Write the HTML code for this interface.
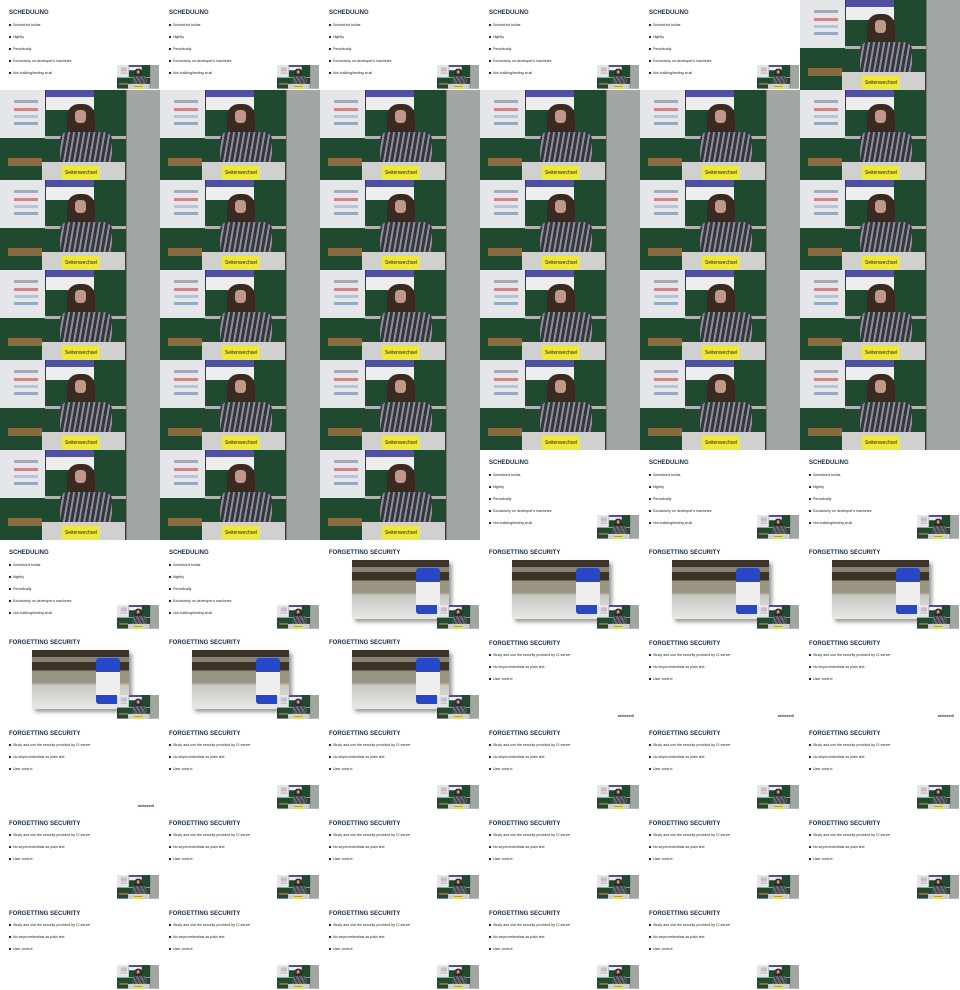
<!DOCTYPE html>
<html><head><meta charset="utf-8"><style>
*{margin:0;padding:0;box-sizing:border-box}
body{width:960px;height:990px;overflow:hidden;background:#fff;font-family:"Liberation Sans",sans-serif}
#g{display:flex;flex-wrap:wrap;width:960px}
.c{width:160px;height:90px;position:relative;overflow:hidden;background:#fff}
.v{position:absolute;left:0;top:0;width:160px;height:90px;background:#1f4a30;overflow:hidden}
.v i{position:absolute;display:block;font-style:normal}
.p{left:0;top:0;width:45px;height:48px;background:#e4e6ea}
.p::after{content:"";position:absolute;left:14px;top:10px;width:24px;height:30px;background:linear-gradient(#8a90a0 0 3px,transparent 3px 8px,#c06060 8px 11px,transparent 11px 15px,#9ab8d8 15px 18px,transparent 18px 22px,#7090b0 22px 25px,transparent 25px);opacity:.7}
.b{left:46px;top:0;width:48px;height:20px;background:linear-gradient(#5050a0 0 7px,#eeeeee 7px)}
.g{left:126px;top:0;width:34px;height:90px;background:#a3a7a3;border-left:1px solid #777}
.l{left:45px;top:46px;width:81px;height:3px;background:#b0b4b0}
.h{left:67px;top:14px;width:28px;height:54px;background:#3a2a22;border-radius:12px 12px 4px 4px}
.f{left:75px;top:20px;width:11px;height:13px;background:#c09888;border-radius:4px}
.t{left:60px;top:42px;width:52px;height:32px;background:repeating-linear-gradient(100deg,#34363e 0 3px,#8e8e98 3px 5px);border-radius:8px 8px 0 0}
.d{left:8px;top:68px;width:34px;height:8px;background:#8a6a40}
.pd{left:42px;top:72px;width:83px;height:18px;background:#d0d0ce}
.y{left:62px;top:76px;width:38px;height:14px;background:#f0e838;font-size:5px;line-height:14px;text-align:center;color:#222}
.s h3{position:absolute;left:9px;top:10px;font-size:6px;color:#1b2a4c;font-weight:bold}
.s p{position:absolute;left:13px;font-size:3.6px;color:#222}
.s p::before{content:"";position:absolute;left:-4px;top:1px;width:1.5px;height:1.5px;background:#1b2a4c}
.in{position:absolute;left:117px;top:65px;width:42px;height:24px;overflow:hidden}
.in .v{transform:scale(.2625);transform-origin:0 0}
.im{position:absolute;left:32px;top:20px;width:97px;height:59px;background:linear-gradient(#3a3428 0 12%,#8a8270 12% 20%,#3a3428 20% 35%,#9a9482 35% 55%,#c8c8c2 60%,#e8e8e6);box-shadow:3px 3px 4px #999}
.im::after{content:"";position:absolute;left:64px;top:8px;width:24px;height:46px;background:linear-gradient(#2848c8 0 30%,#eee 30% 80%,#2848c8 80%);border-radius:3px}
.lg{position:absolute;right:6px;bottom:2px;font-size:4px;color:#1b2a4c;font-weight:bold}
</style></head><body><div id="g">
<div class="c s"><h3>SCHEDULING</h3><p style="top:23px">Scheduled builds</p><p style="top:35px">Nightly</p><p style="top:47px">Periodically</p><p style="top:59px">Exclusively on developer's machines</p><p style="top:71px">Not building/testing at all</p><div class="in"><div class="v"><i class="p"></i><i class="b"></i><i class="g"></i><i class="l"></i><i class="h"></i><i class="t"></i><i class="f"></i><i class="d"></i><i class="pd"></i><i class="y">Seitenwechsel</i></div></div></div>
<div class="c s"><h3>SCHEDULING</h3><p style="top:23px">Scheduled builds</p><p style="top:35px">Nightly</p><p style="top:47px">Periodically</p><p style="top:59px">Exclusively on developer's machines</p><p style="top:71px">Not building/testing at all</p><div class="in"><div class="v"><i class="p"></i><i class="b"></i><i class="g"></i><i class="l"></i><i class="h"></i><i class="t"></i><i class="f"></i><i class="d"></i><i class="pd"></i><i class="y">Seitenwechsel</i></div></div></div>
<div class="c s"><h3>SCHEDULING</h3><p style="top:23px">Scheduled builds</p><p style="top:35px">Nightly</p><p style="top:47px">Periodically</p><p style="top:59px">Exclusively on developer's machines</p><p style="top:71px">Not building/testing at all</p><div class="in"><div class="v"><i class="p"></i><i class="b"></i><i class="g"></i><i class="l"></i><i class="h"></i><i class="t"></i><i class="f"></i><i class="d"></i><i class="pd"></i><i class="y">Seitenwechsel</i></div></div></div>
<div class="c s"><h3>SCHEDULING</h3><p style="top:23px">Scheduled builds</p><p style="top:35px">Nightly</p><p style="top:47px">Periodically</p><p style="top:59px">Exclusively on developer's machines</p><p style="top:71px">Not building/testing at all</p><div class="in"><div class="v"><i class="p"></i><i class="b"></i><i class="g"></i><i class="l"></i><i class="h"></i><i class="t"></i><i class="f"></i><i class="d"></i><i class="pd"></i><i class="y">Seitenwechsel</i></div></div></div>
<div class="c s"><h3>SCHEDULING</h3><p style="top:23px">Scheduled builds</p><p style="top:35px">Nightly</p><p style="top:47px">Periodically</p><p style="top:59px">Exclusively on developer's machines</p><p style="top:71px">Not building/testing at all</p><div class="in"><div class="v"><i class="p"></i><i class="b"></i><i class="g"></i><i class="l"></i><i class="h"></i><i class="t"></i><i class="f"></i><i class="d"></i><i class="pd"></i><i class="y">Seitenwechsel</i></div></div></div>
<div class="c"><div class="v"><i class="p"></i><i class="b"></i><i class="g"></i><i class="l"></i><i class="h"></i><i class="t"></i><i class="f"></i><i class="d"></i><i class="pd"></i><i class="y">Seitenwechsel</i></div></div>
<div class="c"><div class="v"><i class="p"></i><i class="b"></i><i class="g"></i><i class="l"></i><i class="h"></i><i class="t"></i><i class="f"></i><i class="d"></i><i class="pd"></i><i class="y">Seitenwechsel</i></div></div>
<div class="c"><div class="v"><i class="p"></i><i class="b"></i><i class="g"></i><i class="l"></i><i class="h"></i><i class="t"></i><i class="f"></i><i class="d"></i><i class="pd"></i><i class="y">Seitenwechsel</i></div></div>
<div class="c"><div class="v"><i class="p"></i><i class="b"></i><i class="g"></i><i class="l"></i><i class="h"></i><i class="t"></i><i class="f"></i><i class="d"></i><i class="pd"></i><i class="y">Seitenwechsel</i></div></div>
<div class="c"><div class="v"><i class="p"></i><i class="b"></i><i class="g"></i><i class="l"></i><i class="h"></i><i class="t"></i><i class="f"></i><i class="d"></i><i class="pd"></i><i class="y">Seitenwechsel</i></div></div>
<div class="c"><div class="v"><i class="p"></i><i class="b"></i><i class="g"></i><i class="l"></i><i class="h"></i><i class="t"></i><i class="f"></i><i class="d"></i><i class="pd"></i><i class="y">Seitenwechsel</i></div></div>
<div class="c"><div class="v"><i class="p"></i><i class="b"></i><i class="g"></i><i class="l"></i><i class="h"></i><i class="t"></i><i class="f"></i><i class="d"></i><i class="pd"></i><i class="y">Seitenwechsel</i></div></div>
<div class="c"><div class="v"><i class="p"></i><i class="b"></i><i class="g"></i><i class="l"></i><i class="h"></i><i class="t"></i><i class="f"></i><i class="d"></i><i class="pd"></i><i class="y">Seitenwechsel</i></div></div>
<div class="c"><div class="v"><i class="p"></i><i class="b"></i><i class="g"></i><i class="l"></i><i class="h"></i><i class="t"></i><i class="f"></i><i class="d"></i><i class="pd"></i><i class="y">Seitenwechsel</i></div></div>
<div class="c"><div class="v"><i class="p"></i><i class="b"></i><i class="g"></i><i class="l"></i><i class="h"></i><i class="t"></i><i class="f"></i><i class="d"></i><i class="pd"></i><i class="y">Seitenwechsel</i></div></div>
<div class="c"><div class="v"><i class="p"></i><i class="b"></i><i class="g"></i><i class="l"></i><i class="h"></i><i class="t"></i><i class="f"></i><i class="d"></i><i class="pd"></i><i class="y">Seitenwechsel</i></div></div>
<div class="c"><div class="v"><i class="p"></i><i class="b"></i><i class="g"></i><i class="l"></i><i class="h"></i><i class="t"></i><i class="f"></i><i class="d"></i><i class="pd"></i><i class="y">Seitenwechsel</i></div></div>
<div class="c"><div class="v"><i class="p"></i><i class="b"></i><i class="g"></i><i class="l"></i><i class="h"></i><i class="t"></i><i class="f"></i><i class="d"></i><i class="pd"></i><i class="y">Seitenwechsel</i></div></div>
<div class="c"><div class="v"><i class="p"></i><i class="b"></i><i class="g"></i><i class="l"></i><i class="h"></i><i class="t"></i><i class="f"></i><i class="d"></i><i class="pd"></i><i class="y">Seitenwechsel</i></div></div>
<div class="c"><div class="v"><i class="p"></i><i class="b"></i><i class="g"></i><i class="l"></i><i class="h"></i><i class="t"></i><i class="f"></i><i class="d"></i><i class="pd"></i><i class="y">Seitenwechsel</i></div></div>
<div class="c"><div class="v"><i class="p"></i><i class="b"></i><i class="g"></i><i class="l"></i><i class="h"></i><i class="t"></i><i class="f"></i><i class="d"></i><i class="pd"></i><i class="y">Seitenwechsel</i></div></div>
<div class="c"><div class="v"><i class="p"></i><i class="b"></i><i class="g"></i><i class="l"></i><i class="h"></i><i class="t"></i><i class="f"></i><i class="d"></i><i class="pd"></i><i class="y">Seitenwechsel</i></div></div>
<div class="c"><div class="v"><i class="p"></i><i class="b"></i><i class="g"></i><i class="l"></i><i class="h"></i><i class="t"></i><i class="f"></i><i class="d"></i><i class="pd"></i><i class="y">Seitenwechsel</i></div></div>
<div class="c"><div class="v"><i class="p"></i><i class="b"></i><i class="g"></i><i class="l"></i><i class="h"></i><i class="t"></i><i class="f"></i><i class="d"></i><i class="pd"></i><i class="y">Seitenwechsel</i></div></div>
<div class="c"><div class="v"><i class="p"></i><i class="b"></i><i class="g"></i><i class="l"></i><i class="h"></i><i class="t"></i><i class="f"></i><i class="d"></i><i class="pd"></i><i class="y">Seitenwechsel</i></div></div>
<div class="c"><div class="v"><i class="p"></i><i class="b"></i><i class="g"></i><i class="l"></i><i class="h"></i><i class="t"></i><i class="f"></i><i class="d"></i><i class="pd"></i><i class="y">Seitenwechsel</i></div></div>
<div class="c"><div class="v"><i class="p"></i><i class="b"></i><i class="g"></i><i class="l"></i><i class="h"></i><i class="t"></i><i class="f"></i><i class="d"></i><i class="pd"></i><i class="y">Seitenwechsel</i></div></div>
<div class="c"><div class="v"><i class="p"></i><i class="b"></i><i class="g"></i><i class="l"></i><i class="h"></i><i class="t"></i><i class="f"></i><i class="d"></i><i class="pd"></i><i class="y">Seitenwechsel</i></div></div>
<div class="c"><div class="v"><i class="p"></i><i class="b"></i><i class="g"></i><i class="l"></i><i class="h"></i><i class="t"></i><i class="f"></i><i class="d"></i><i class="pd"></i><i class="y">Seitenwechsel</i></div></div>
<div class="c"><div class="v"><i class="p"></i><i class="b"></i><i class="g"></i><i class="l"></i><i class="h"></i><i class="t"></i><i class="f"></i><i class="d"></i><i class="pd"></i><i class="y">Seitenwechsel</i></div></div>
<div class="c"><div class="v"><i class="p"></i><i class="b"></i><i class="g"></i><i class="l"></i><i class="h"></i><i class="t"></i><i class="f"></i><i class="d"></i><i class="pd"></i><i class="y">Seitenwechsel</i></div></div>
<div class="c"><div class="v"><i class="p"></i><i class="b"></i><i class="g"></i><i class="l"></i><i class="h"></i><i class="t"></i><i class="f"></i><i class="d"></i><i class="pd"></i><i class="y">Seitenwechsel</i></div></div>
<div class="c"><div class="v"><i class="p"></i><i class="b"></i><i class="g"></i><i class="l"></i><i class="h"></i><i class="t"></i><i class="f"></i><i class="d"></i><i class="pd"></i><i class="y">Seitenwechsel</i></div></div>
<div class="c s"><h3>SCHEDULING</h3><p style="top:23px">Scheduled builds</p><p style="top:35px">Nightly</p><p style="top:47px">Periodically</p><p style="top:59px">Exclusively on developer's machines</p><p style="top:71px">Not building/testing at all</p><div class="in"><div class="v"><i class="p"></i><i class="b"></i><i class="g"></i><i class="l"></i><i class="h"></i><i class="t"></i><i class="f"></i><i class="d"></i><i class="pd"></i><i class="y">Seitenwechsel</i></div></div></div>
<div class="c s"><h3>SCHEDULING</h3><p style="top:23px">Scheduled builds</p><p style="top:35px">Nightly</p><p style="top:47px">Periodically</p><p style="top:59px">Exclusively on developer's machines</p><p style="top:71px">Not building/testing at all</p><div class="in"><div class="v"><i class="p"></i><i class="b"></i><i class="g"></i><i class="l"></i><i class="h"></i><i class="t"></i><i class="f"></i><i class="d"></i><i class="pd"></i><i class="y">Seitenwechsel</i></div></div></div>
<div class="c s"><h3>SCHEDULING</h3><p style="top:23px">Scheduled builds</p><p style="top:35px">Nightly</p><p style="top:47px">Periodically</p><p style="top:59px">Exclusively on developer's machines</p><p style="top:71px">Not building/testing at all</p><div class="in"><div class="v"><i class="p"></i><i class="b"></i><i class="g"></i><i class="l"></i><i class="h"></i><i class="t"></i><i class="f"></i><i class="d"></i><i class="pd"></i><i class="y">Seitenwechsel</i></div></div></div>
<div class="c s"><h3>SCHEDULING</h3><p style="top:23px">Scheduled builds</p><p style="top:35px">Nightly</p><p style="top:47px">Periodically</p><p style="top:59px">Exclusively on developer's machines</p><p style="top:71px">Not building/testing at all</p><div class="in"><div class="v"><i class="p"></i><i class="b"></i><i class="g"></i><i class="l"></i><i class="h"></i><i class="t"></i><i class="f"></i><i class="d"></i><i class="pd"></i><i class="y">Seitenwechsel</i></div></div></div>
<div class="c s"><h3>SCHEDULING</h3><p style="top:23px">Scheduled builds</p><p style="top:35px">Nightly</p><p style="top:47px">Periodically</p><p style="top:59px">Exclusively on developer's machines</p><p style="top:71px">Not building/testing at all</p><div class="in"><div class="v"><i class="p"></i><i class="b"></i><i class="g"></i><i class="l"></i><i class="h"></i><i class="t"></i><i class="f"></i><i class="d"></i><i class="pd"></i><i class="y">Seitenwechsel</i></div></div></div>
<div class="c s"><h3>FORGETTING SECURITY</h3><div class="im"></div><div class="in"><div class="v"><i class="p"></i><i class="b"></i><i class="g"></i><i class="l"></i><i class="h"></i><i class="t"></i><i class="f"></i><i class="d"></i><i class="pd"></i><i class="y">Seitenwechsel</i></div></div></div>
<div class="c s"><h3>FORGETTING SECURITY</h3><div class="im"></div><div class="in"><div class="v"><i class="p"></i><i class="b"></i><i class="g"></i><i class="l"></i><i class="h"></i><i class="t"></i><i class="f"></i><i class="d"></i><i class="pd"></i><i class="y">Seitenwechsel</i></div></div></div>
<div class="c s"><h3>FORGETTING SECURITY</h3><div class="im"></div><div class="in"><div class="v"><i class="p"></i><i class="b"></i><i class="g"></i><i class="l"></i><i class="h"></i><i class="t"></i><i class="f"></i><i class="d"></i><i class="pd"></i><i class="y">Seitenwechsel</i></div></div></div>
<div class="c s"><h3>FORGETTING SECURITY</h3><div class="im"></div><div class="in"><div class="v"><i class="p"></i><i class="b"></i><i class="g"></i><i class="l"></i><i class="h"></i><i class="t"></i><i class="f"></i><i class="d"></i><i class="pd"></i><i class="y">Seitenwechsel</i></div></div></div>
<div class="c s"><h3>FORGETTING SECURITY</h3><div class="im"></div><div class="in"><div class="v"><i class="p"></i><i class="b"></i><i class="g"></i><i class="l"></i><i class="h"></i><i class="t"></i><i class="f"></i><i class="d"></i><i class="pd"></i><i class="y">Seitenwechsel</i></div></div></div>
<div class="c s"><h3>FORGETTING SECURITY</h3><div class="im"></div><div class="in"><div class="v"><i class="p"></i><i class="b"></i><i class="g"></i><i class="l"></i><i class="h"></i><i class="t"></i><i class="f"></i><i class="d"></i><i class="pd"></i><i class="y">Seitenwechsel</i></div></div></div>
<div class="c s"><h3>FORGETTING SECURITY</h3><div class="im"></div><div class="in"><div class="v"><i class="p"></i><i class="b"></i><i class="g"></i><i class="l"></i><i class="h"></i><i class="t"></i><i class="f"></i><i class="d"></i><i class="pd"></i><i class="y">Seitenwechsel</i></div></div></div>
<div class="c s"><h3 style="top:11px">FORGETTING SECURITY</h3><p style="top:23px">Study and use the security provided by CI server</p><p style="top:35px">No keys/credentials as plain text</p><p style="top:47px">User control</p><div class="lg">sebcenti</div></div>
<div class="c s"><h3 style="top:11px">FORGETTING SECURITY</h3><p style="top:23px">Study and use the security provided by CI server</p><p style="top:35px">No keys/credentials as plain text</p><p style="top:47px">User control</p><div class="lg">sebcenti</div></div>
<div class="c s"><h3 style="top:11px">FORGETTING SECURITY</h3><p style="top:23px">Study and use the security provided by CI server</p><p style="top:35px">No keys/credentials as plain text</p><p style="top:47px">User control</p><div class="lg">sebcenti</div></div>
<div class="c s"><h3 style="top:11px">FORGETTING SECURITY</h3><p style="top:23px">Study and use the security provided by CI server</p><p style="top:35px">No keys/credentials as plain text</p><p style="top:47px">User control</p><div class="lg">sebcenti</div></div>
<div class="c s"><h3 style="top:11px">FORGETTING SECURITY</h3><p style="top:23px">Study and use the security provided by CI server</p><p style="top:35px">No keys/credentials as plain text</p><p style="top:47px">User control</p><div class="in"><div class="v"><i class="p"></i><i class="b"></i><i class="g"></i><i class="l"></i><i class="h"></i><i class="t"></i><i class="f"></i><i class="d"></i><i class="pd"></i><i class="y">Seitenwechsel</i></div></div></div>
<div class="c s"><h3 style="top:11px">FORGETTING SECURITY</h3><p style="top:23px">Study and use the security provided by CI server</p><p style="top:35px">No keys/credentials as plain text</p><p style="top:47px">User control</p><div class="in"><div class="v"><i class="p"></i><i class="b"></i><i class="g"></i><i class="l"></i><i class="h"></i><i class="t"></i><i class="f"></i><i class="d"></i><i class="pd"></i><i class="y">Seitenwechsel</i></div></div></div>
<div class="c s"><h3 style="top:11px">FORGETTING SECURITY</h3><p style="top:23px">Study and use the security provided by CI server</p><p style="top:35px">No keys/credentials as plain text</p><p style="top:47px">User control</p><div class="in"><div class="v"><i class="p"></i><i class="b"></i><i class="g"></i><i class="l"></i><i class="h"></i><i class="t"></i><i class="f"></i><i class="d"></i><i class="pd"></i><i class="y">Seitenwechsel</i></div></div></div>
<div class="c s"><h3 style="top:11px">FORGETTING SECURITY</h3><p style="top:23px">Study and use the security provided by CI server</p><p style="top:35px">No keys/credentials as plain text</p><p style="top:47px">User control</p><div class="in"><div class="v"><i class="p"></i><i class="b"></i><i class="g"></i><i class="l"></i><i class="h"></i><i class="t"></i><i class="f"></i><i class="d"></i><i class="pd"></i><i class="y">Seitenwechsel</i></div></div></div>
<div class="c s"><h3 style="top:11px">FORGETTING SECURITY</h3><p style="top:23px">Study and use the security provided by CI server</p><p style="top:35px">No keys/credentials as plain text</p><p style="top:47px">User control</p><div class="in"><div class="v"><i class="p"></i><i class="b"></i><i class="g"></i><i class="l"></i><i class="h"></i><i class="t"></i><i class="f"></i><i class="d"></i><i class="pd"></i><i class="y">Seitenwechsel</i></div></div></div>
<div class="c s"><h3 style="top:11px">FORGETTING SECURITY</h3><p style="top:23px">Study and use the security provided by CI server</p><p style="top:35px">No keys/credentials as plain text</p><p style="top:47px">User control</p><div class="in"><div class="v"><i class="p"></i><i class="b"></i><i class="g"></i><i class="l"></i><i class="h"></i><i class="t"></i><i class="f"></i><i class="d"></i><i class="pd"></i><i class="y">Seitenwechsel</i></div></div></div>
<div class="c s"><h3 style="top:11px">FORGETTING SECURITY</h3><p style="top:23px">Study and use the security provided by CI server</p><p style="top:35px">No keys/credentials as plain text</p><p style="top:47px">User control</p><div class="in"><div class="v"><i class="p"></i><i class="b"></i><i class="g"></i><i class="l"></i><i class="h"></i><i class="t"></i><i class="f"></i><i class="d"></i><i class="pd"></i><i class="y">Seitenwechsel</i></div></div></div>
<div class="c s"><h3 style="top:11px">FORGETTING SECURITY</h3><p style="top:23px">Study and use the security provided by CI server</p><p style="top:35px">No keys/credentials as plain text</p><p style="top:47px">User control</p><div class="in"><div class="v"><i class="p"></i><i class="b"></i><i class="g"></i><i class="l"></i><i class="h"></i><i class="t"></i><i class="f"></i><i class="d"></i><i class="pd"></i><i class="y">Seitenwechsel</i></div></div></div>
<div class="c s"><h3 style="top:11px">FORGETTING SECURITY</h3><p style="top:23px">Study and use the security provided by CI server</p><p style="top:35px">No keys/credentials as plain text</p><p style="top:47px">User control</p><div class="in"><div class="v"><i class="p"></i><i class="b"></i><i class="g"></i><i class="l"></i><i class="h"></i><i class="t"></i><i class="f"></i><i class="d"></i><i class="pd"></i><i class="y">Seitenwechsel</i></div></div></div>
<div class="c s"><h3 style="top:11px">FORGETTING SECURITY</h3><p style="top:23px">Study and use the security provided by CI server</p><p style="top:35px">No keys/credentials as plain text</p><p style="top:47px">User control</p><div class="in"><div class="v"><i class="p"></i><i class="b"></i><i class="g"></i><i class="l"></i><i class="h"></i><i class="t"></i><i class="f"></i><i class="d"></i><i class="pd"></i><i class="y">Seitenwechsel</i></div></div></div>
<div class="c s"><h3 style="top:11px">FORGETTING SECURITY</h3><p style="top:23px">Study and use the security provided by CI server</p><p style="top:35px">No keys/credentials as plain text</p><p style="top:47px">User control</p><div class="in"><div class="v"><i class="p"></i><i class="b"></i><i class="g"></i><i class="l"></i><i class="h"></i><i class="t"></i><i class="f"></i><i class="d"></i><i class="pd"></i><i class="y">Seitenwechsel</i></div></div></div>
<div class="c s"><h3 style="top:11px">FORGETTING SECURITY</h3><p style="top:23px">Study and use the security provided by CI server</p><p style="top:35px">No keys/credentials as plain text</p><p style="top:47px">User control</p><div class="in"><div class="v"><i class="p"></i><i class="b"></i><i class="g"></i><i class="l"></i><i class="h"></i><i class="t"></i><i class="f"></i><i class="d"></i><i class="pd"></i><i class="y">Seitenwechsel</i></div></div></div>
<div class="c s"><h3 style="top:11px">FORGETTING SECURITY</h3><p style="top:23px">Study and use the security provided by CI server</p><p style="top:35px">No keys/credentials as plain text</p><p style="top:47px">User control</p><div class="in"><div class="v"><i class="p"></i><i class="b"></i><i class="g"></i><i class="l"></i><i class="h"></i><i class="t"></i><i class="f"></i><i class="d"></i><i class="pd"></i><i class="y">Seitenwechsel</i></div></div></div>
<div class="c s"><h3 style="top:11px">FORGETTING SECURITY</h3><p style="top:23px">Study and use the security provided by CI server</p><p style="top:35px">No keys/credentials as plain text</p><p style="top:47px">User control</p><div class="in"><div class="v"><i class="p"></i><i class="b"></i><i class="g"></i><i class="l"></i><i class="h"></i><i class="t"></i><i class="f"></i><i class="d"></i><i class="pd"></i><i class="y">Seitenwechsel</i></div></div></div>
<div class="c s"><h3 style="top:11px">FORGETTING SECURITY</h3><p style="top:23px">Study and use the security provided by CI server</p><p style="top:35px">No keys/credentials as plain text</p><p style="top:47px">User control</p><div class="in"><div class="v"><i class="p"></i><i class="b"></i><i class="g"></i><i class="l"></i><i class="h"></i><i class="t"></i><i class="f"></i><i class="d"></i><i class="pd"></i><i class="y">Seitenwechsel</i></div></div></div>
<div class="c s"><h3 style="top:11px">FORGETTING SECURITY</h3><p style="top:23px">Study and use the security provided by CI server</p><p style="top:35px">No keys/credentials as plain text</p><p style="top:47px">User control</p><div class="in"><div class="v"><i class="p"></i><i class="b"></i><i class="g"></i><i class="l"></i><i class="h"></i><i class="t"></i><i class="f"></i><i class="d"></i><i class="pd"></i><i class="y">Seitenwechsel</i></div></div></div>
</div></body></html>
